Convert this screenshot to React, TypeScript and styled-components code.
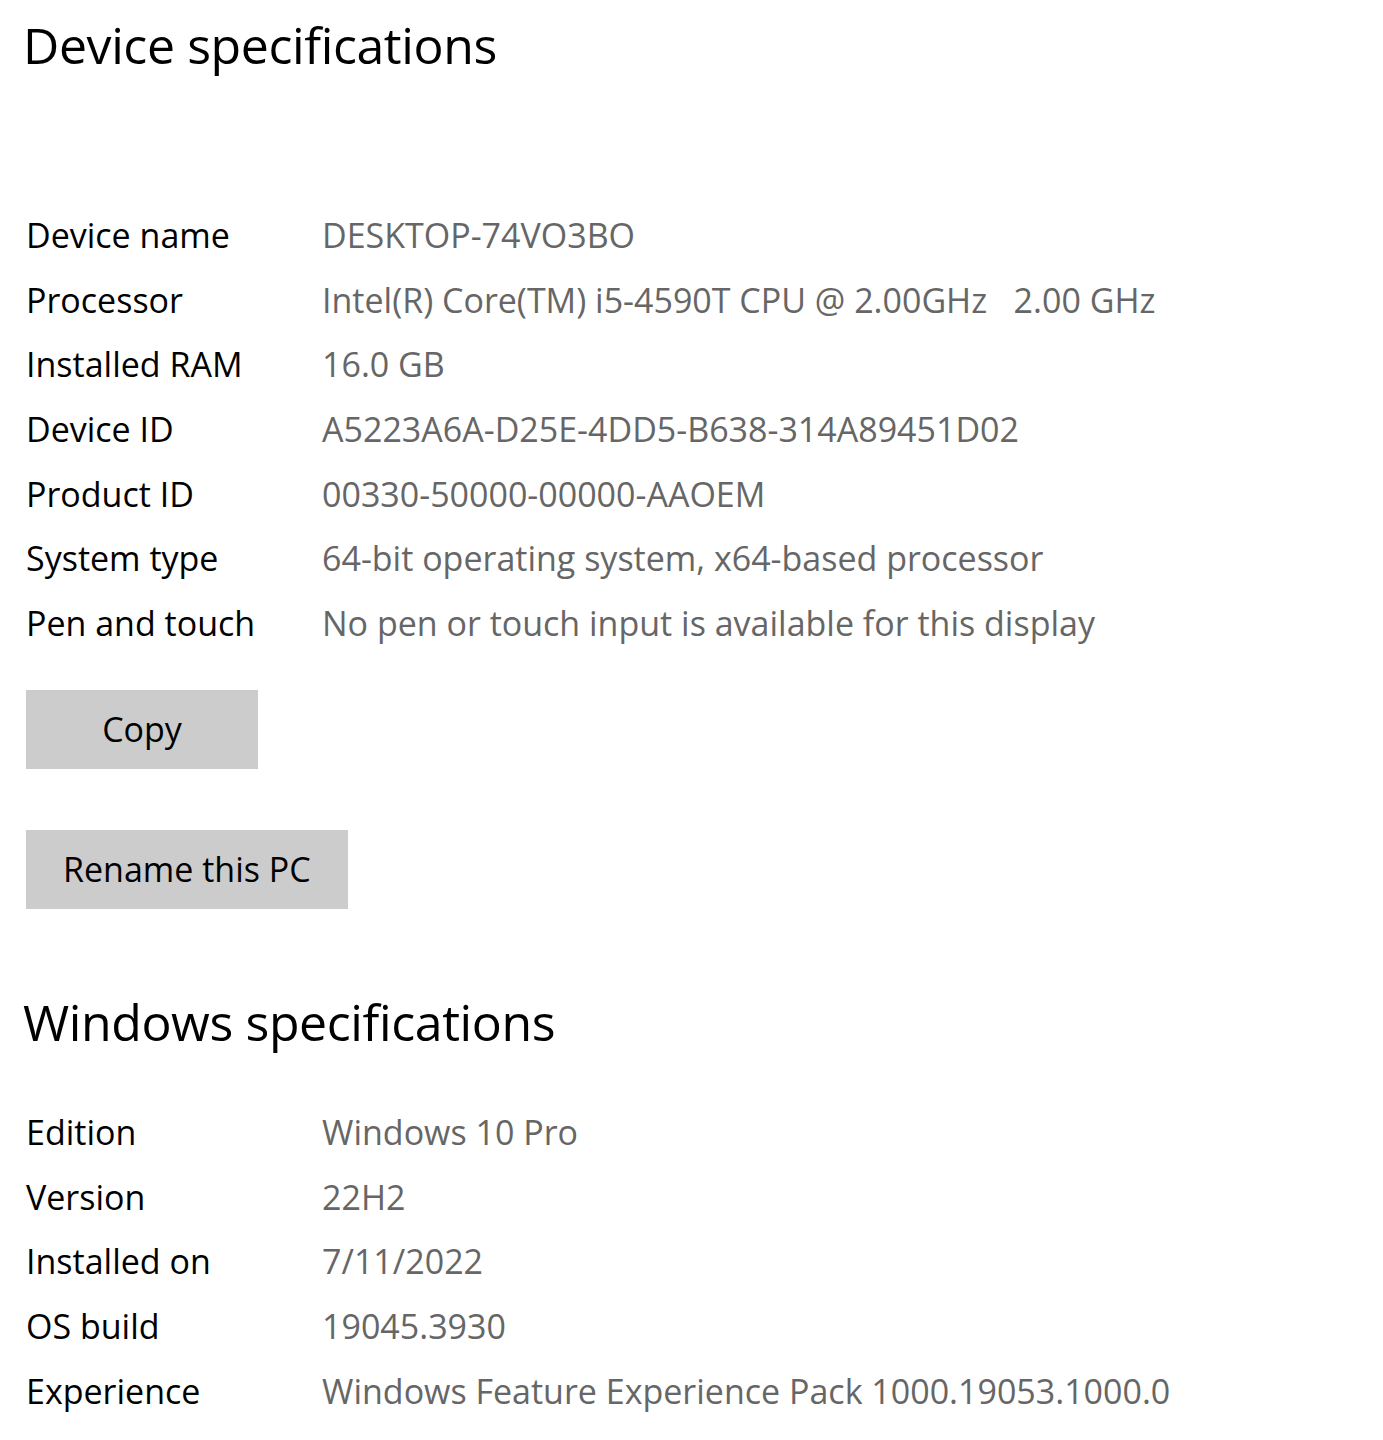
import React from "react";
import styled, { createGlobalStyle } from "styled-components";

const GlobalStyle = createGlobalStyle`
  html, body {
    margin: 0;
    padding: 0;
    background: #ffffff;
  }
  body {
    font-family: "Open Sans", "Noto Sans", "Liberation Sans", sans-serif;
    color: #000000;
  }
`;

const Page = styled.div`
  width: 1383px;
  min-height: 1440px;
  box-sizing: border-box;
  padding: 0 0 0 26px;
  display: flex;
  flex-direction: column;
  align-items: flex-start;
`;

const Heading = styled.h2<{ $top: number; $bottom: number }>`
  margin: ${(p) => p.$top}px 0 ${(p) => p.$bottom}px -3px;
  font-size: 50px;
  line-height: 60px;
  font-weight: 400;
  color: #000000;
  letter-spacing: -0.4px;
`;

const SpecGrid = styled.dl`
  margin: 0;
  display: grid;
  grid-template-columns: 296px auto;
  grid-auto-rows: 64.7px;
  align-items: center;
  font-size: 34px;
  line-height: 64.7px;
`;

const Label = styled.dt`
  margin: 0;
  color: #000000;
  white-space: nowrap;
`;

const Value = styled.dd`
  margin: 0;
  color: #666666;
  white-space: pre;
`;

const Button = styled.button<{ $top: number }>`
  margin: ${(p) => p.$top}px 0 0 0;
  min-width: 232px;
  height: 79px;
  padding: 0 37px;
  border: none;
  background: #cccccc;
  color: #000000;
  font-family: inherit;
  font-size: 34px;
  line-height: 79px;
  text-align: center;
  cursor: pointer;
`;

const deviceSpecs: [string, string][] = [
  ["Device name", "DESKTOP-74VO3BO"],
  ["Processor", "Intel(R) Core(TM) i5-4590T CPU @ 2.00GHz   2.00 GHz"],
  ["Installed RAM", "16.0 GB"],
  ["Device ID", "A5223A6A-D25E-4DD5-B638-314A89451D02"],
  ["Product ID", "00330-50000-00000-AAOEM"],
  ["System type", "64-bit operating system, x64-based processor"],
  ["Pen and touch", "No pen or touch input is available for this display"],
];

const windowsSpecs: [string, string][] = [
  ["Edition", "Windows 10 Pro"],
  ["Version", "22H2"],
  ["Installed on", "7/11/2022"],
  ["OS build", "19045.3930"],
  ["Experience", "Windows Feature Experience Pack 1000.19053.1000.0"],
];

const Specs = ({ items }: { items: [string, string][] }) => (
  <SpecGrid>
    {items.map(([k, v]) => (
      <React.Fragment key={k}>
        <Label>{k}</Label>
        <Value>{v}</Value>
      </React.Fragment>
    ))}
  </SpecGrid>
);

export default function App() {
  return (
    <>
      <GlobalStyle />
      <Page>
        <Heading $top={15} $bottom={128}>Device specifications</Heading>
        <Specs items={deviceSpecs} />
        <Button $top={34}>Copy</Button>
        <Button $top={61}>Rename this PC</Button>
        <Heading $top={83} $bottom={48}>Windows specifications</Heading>
        <Specs items={windowsSpecs} />
      </Page>
    </>
  );
}
